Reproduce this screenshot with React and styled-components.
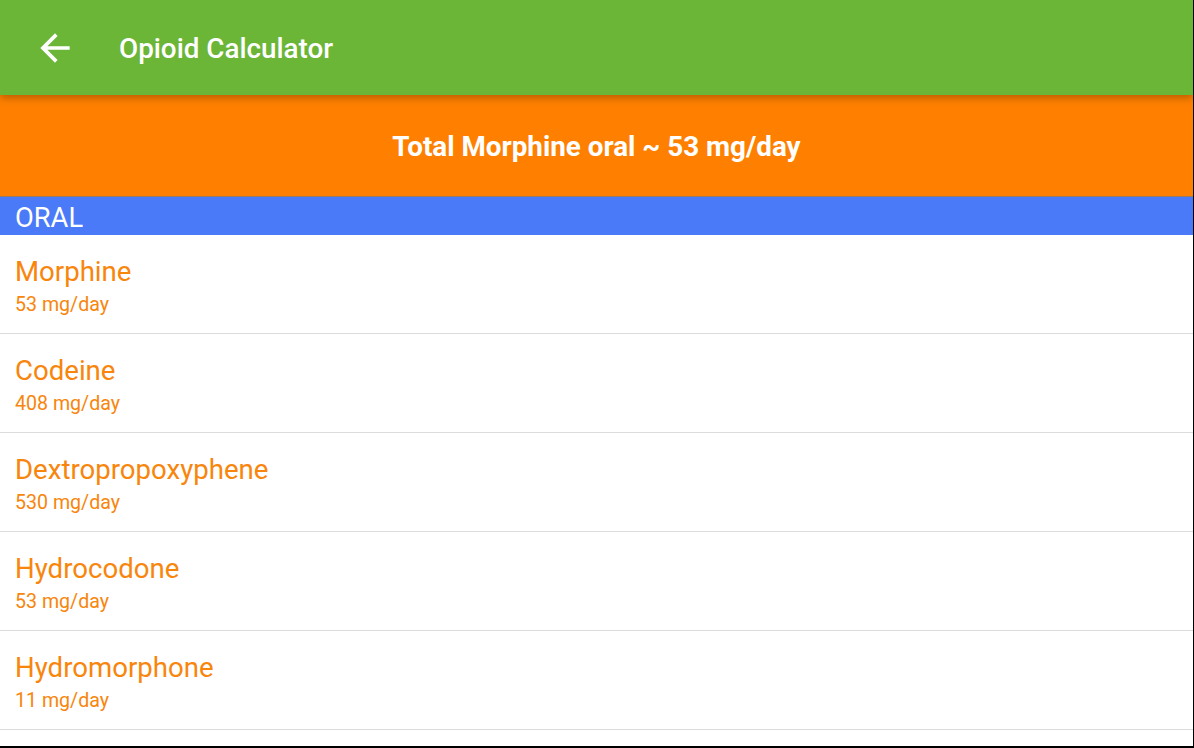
import React from "react";
import styled, { createGlobalStyle } from "styled-components";

const Global = createGlobalStyle`
  html, body { margin: 0; padding: 0; background: #fff; }
  body { font-family: Roboto, "Noto Sans", sans-serif; }
  * { box-sizing: border-box; }
`;

const Screen = styled.div`
  width: 1194px;
  height: 748px;
  display: flex;
  flex-direction: column;
  border-right: 1px solid #000;
  border-bottom: 2px solid #000;
  overflow: hidden;
  background: #fff;
`;

const AppBar = styled.header`
  height: 95px;
  flex: none;
  background: #6bb537;
  display: flex;
  align-items: center;
  padding-left: 32px;
  padding-top: 1px;
  position: relative;
  z-index: 2;
  box-shadow: 0 3px 8px rgba(0, 0, 0, 0.28);
`;

const BackButton = styled.button`
  border: 0;
  background: none;
  padding: 0;
  width: 46px;
  height: 46px;
  display: flex;
  align-items: center;
  justify-content: center;
  color: #fff;
  margin-right: 41px;
`;

const Title = styled.h1`
  margin: 0;
  color: #fff;
  font-family: Roboto, sans-serif;
  font-weight: 500;
  font-size: 27.8px;
`;

const Banner = styled.div`
  height: 102px;
  flex: none;
  background: #ff8000;
  display: flex;
  align-items: center;
  justify-content: center;
  color: #fff;
  font-family: Roboto, sans-serif;
  font-weight: 700;
  font-size: 27.8px;
  padding-top: 2px;
  border-bottom: 1px solid #9a7a60;
`;

const SectionHeader = styled.div`
  height: 38px;
  flex: none;
  background: #4a7af8;
  color: #fff;
  font-family: Roboto, sans-serif;
  font-size: 27.3px;
  display: flex;
  align-items: center;
  padding-left: 15px;
  padding-top: 4px;
`;

const List = styled.ul`
  list-style: none;
  margin: 0;
  padding: 0;
`;

const Row = styled.li`
  height: 99px;
  border-bottom: 1px solid #dcdcdc;
  padding: 21px 15px 0;
  display: flex;
  flex-direction: column;
`;

const Name = styled.div`
  color: #f8850c;
  font-family: Roboto, sans-serif;
  font-size: 27.6px;
  line-height: 32px;
`;

const Dose = styled.div`
  color: #f8850c;
  font-family: Roboto, sans-serif;
  font-size: 19.6px;
  line-height: 24px;
  margin-top: 5px;
`;

const drugs = [
  ["Morphine", "53 mg/day"],
  ["Codeine", "408 mg/day"],
  ["Dextropropoxyphene", "530 mg/day"],
  ["Hydrocodone", "53 mg/day"],
  ["Hydromorphone", "11 mg/day"],
];

export default function App() {
  return (
    <>
      <Global />
      <Screen>
        <AppBar>
          <BackButton aria-label="Back">
            <svg width="44" height="44" viewBox="0 0 24 24" fill="currentColor">
              <path d="M20 11H7.83l5.59-5.59L12 4l-8 8 8 8 1.41-1.41L7.83 13H20v-2z" />
            </svg>
          </BackButton>
          <Title>Opioid Calculator</Title>
        </AppBar>
        <Banner>Total Morphine oral ~ 53 mg/day</Banner>
        <SectionHeader>ORAL</SectionHeader>
        <List>
          {drugs.map(([n, d]) => (
            <Row key={n}>
              <Name>{n}</Name>
              <Dose>{d}</Dose>
            </Row>
          ))}
        </List>
      </Screen>
    </>
  );
}
